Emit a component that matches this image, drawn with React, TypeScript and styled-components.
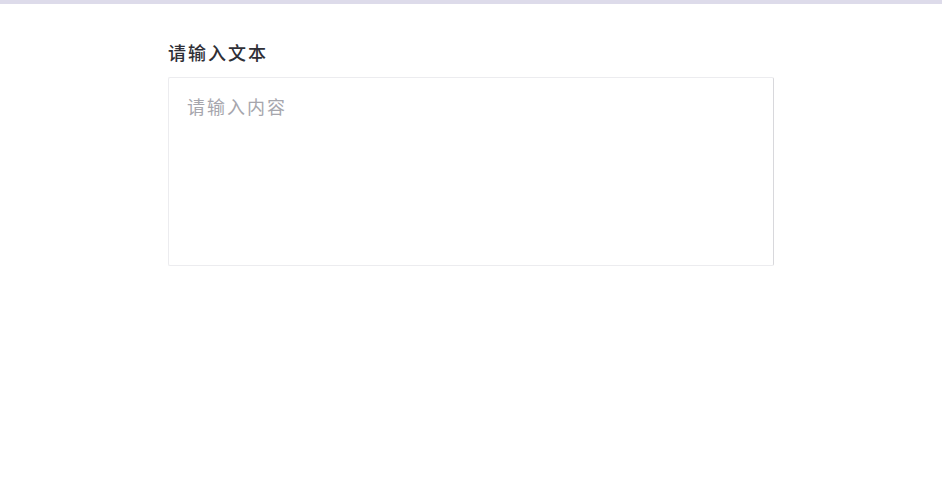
import React from "react";
import styled, { createGlobalStyle } from "styled-components";

const GlobalStyle = createGlobalStyle`
  html, body {
    margin: 0;
    padding: 0;
    background: #ffffff;
    font-family: "Noto Sans CJK SC", "Noto Sans", sans-serif;
  }
`;

const TopBar = styled.div`
  height: 4px;
  background: #dddbea;
`;

const Page = styled.main`
  display: flex;
  justify-content: center;
  padding-top: 35px;
`;

const Field = styled.div`
  width: 606px;
  display: flex;
  flex-direction: column;
  gap: 12px;
`;

const Label = styled.label`
  font-size: 18px;
  line-height: 26px;
  letter-spacing: 2px;
  font-weight: 500;
  color: #2f2f36;
`;

const TextArea = styled.textarea`
  box-sizing: border-box;
  height: 189px;
  resize: none;
  padding: 16px 18px;
  border: 1px solid #ececef;
  border-right-color: #d8d8dc;
  border-radius: 2px;
  font-family: "Noto Sans CJK SC", "Noto Sans", sans-serif;
  font-size: 18px;
  line-height: 24px;
  letter-spacing: 2px;
  color: #333;
  outline: none;
  &::placeholder {
    color: #a6a6ad;
  }
`;

export default function App() {
  return (
    <>
      <GlobalStyle />
      <TopBar />
      <Page>
        <Field>
          <Label>请输入文本</Label>
          <TextArea placeholder="请输入内容" />
        </Field>
      </Page>
    </>
  );
}
